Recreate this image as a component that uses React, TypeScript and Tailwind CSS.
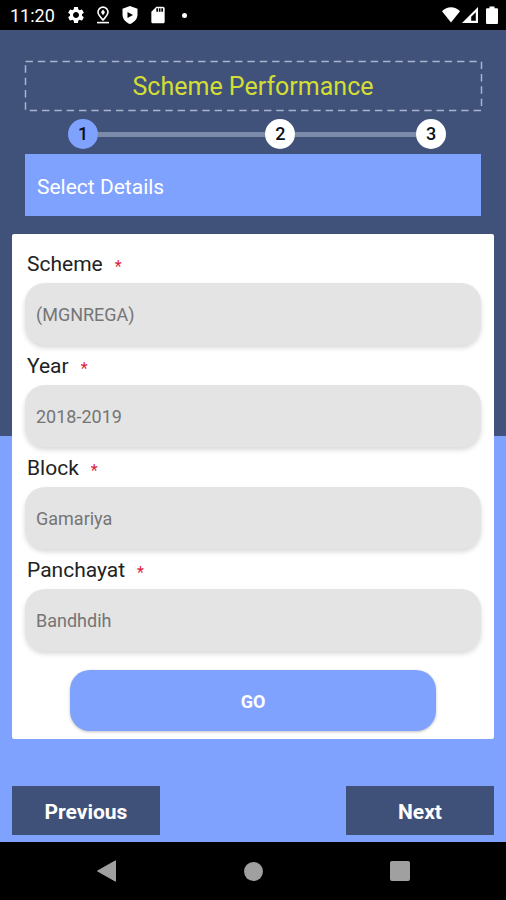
import React from "react";
import { MdSettings, MdSdCard } from "react-icons/md";

const STEPS = ["1", "2", "3"];

const FIELDS = [
  { id: "scheme", label: "Scheme", value: "(MGNREGA)" },
  { id: "year", label: "Year", value: "2018-2019" },
  { id: "block", label: "Block", value: "Gamariya" },
  { id: "panchayat", label: "Panchayat", value: "Bandhdih" },
];

const StatusBar: React.FC = () => (
  <div className="flex h-[30px] shrink-0 items-center justify-between bg-black pl-2.5 pr-2 text-white">
    <div className="flex items-center">
      <span className="w-14 pt-0.5 text-lg">11:20</span>
      <MdSettings className="mr-2.5 h-5 w-5" />
      <svg viewBox="0 0 14 18" className="mr-3 h-[18px] w-3.5" fill="none" stroke="currentColor" strokeWidth="1.6">
        <path d="M7 14C4.200 11 2 9 2 6.100a5 5 0 0 1 10 0C12 9 9.800 11 7 14z" />
        <path d="M7 3.600l2 2.600-2 3-2-3z" fill="currentColor" stroke="none" />
        <path d="M1 16.600h12" />
      </svg>
      <svg viewBox="0 0 16 18" className="mr-3 h-[18px] w-4" fill="currentColor" fillRule="evenodd">
        <path d="M8 0l7.500 2.700v6c0 4.200-3.500 7.800-7.500 9.300-4-1.500-7.500-5.100-7.500-9.300v-6zM5.500 6v6L11 9z" />
      </svg>
      <MdSdCard className="-mx-0.5 h-5 w-5" />
      <span className="ml-4 h-[5px] w-[5px] rounded-full bg-white" />
    </div>
    <div className="flex items-center">
      <svg viewBox="0 0 18 16" className="h-4 w-[18px]" fill="currentColor">
        <path d="M0 4.200C5-1 13-1 18 4.200L9 15.500z" />
      </svg>
      <svg viewBox="0 0 16 16" className="ml-0.5 h-4 w-4" fill="currentColor" fillRule="evenodd">
        <path d="M16 0v16H0zM13.800 5.200L9.200 9.800v4h4.600z" />
      </svg>
      <svg viewBox="0 0 12 18" className="ml-2 h-[18px] w-3" fill="currentColor">
        <path d="M3.500 0.500h5v1.700H11a1 1 0 0 1 1 1V17a1 1 0 0 1-1 1H1a1 1 0 0 1-1-1V3.200a1 1 0 0 1 1-1h2.500z" />
      </svg>
    </div>
  </div>
);

const Stepper: React.FC = () => (
  <ol className="mt-2 flex items-center pl-[43px] pr-[35px]">
    {STEPS.map((step, index) => (
      <React.Fragment key={step}>
        {index > 0 && (
          <li
            aria-hidden="true"
            className={`h-[5px] bg-[#7d8baa] ${index === 1 ? "grow-[168]" : "grow-[121]"}`}
          />
        )}
        <li
          className={`flex h-[30px] w-[30px] items-center justify-center rounded-full text-lg font-medium text-[#0b1020] ${
            index === 0 ? "bg-[#80a2ff]" : "bg-white"
          }`}
        >
          {step}
        </li>
      </React.Fragment>
    ))}
  </ol>
);

const Field: React.FC<{ id: string; label: string; value: string }> = ({ id, label, value }) => (
  <div>
    <label htmlFor={id} className="flex h-10 items-center gap-3 pl-0.5 pt-1 text-[21px] text-[#222]">
      {label}
      <span className="pt-1 text-base text-[#e0203c]">*</span>
    </label>
    <select
      id={id}
      defaultValue={value}
      className="block h-[62px] w-full appearance-none rounded-[20px] bg-[#e4e4e4] px-[11px] pt-0.5 text-lg text-[#757575] shadow-[0_3px_5px_rgba(0,0,0,0.15)]"
    >
      <option>{value}</option>
    </select>
  </div>
);

const NavBar: React.FC = () => (
  <nav className="flex h-[58px] shrink-0 items-center justify-around bg-black px-[33px] text-[#a0a0a0]">
    <button aria-label="Back">
      <svg viewBox="0 0 20 22" className="h-[22px] w-5" fill="currentColor">
        <path d="M18.500 0.800v20.400L0.500 11z" stroke="currentColor" strokeLinejoin="round" />
      </svg>
    </button>
    <button aria-label="Home" className="h-[19px] w-[19px] rounded-full bg-[#a0a0a0]" />
    <button aria-label="Recent apps" className="h-5 w-5 rounded-[2px] bg-[#a0a0a0]" />
  </nav>
);

export default function App() {
  return (
    <div className="flex min-h-screen flex-col font-[Roboto,sans-serif]">
      <StatusBar />
      <main className="flex grow flex-col bg-[linear-gradient(#40527a_50%,#80a2ff_50%)] px-3 pb-[7px] pt-[31px]">
        <header className="px-[13px]">
          <div className="relative flex h-[50px] items-center justify-center">
            <svg className="absolute inset-0 h-full w-full overflow-visible" fill="none" aria-hidden="true">
              <rect x="0.500" y="0.500" width="100%" height="49" stroke="#a9b5cf" strokeWidth="1.500" strokeDasharray="7.400 4.930" />
            </svg>
            <h1 className="pt-0.5 text-[25px] text-[#d3de35]">Scheme Performance</h1>
          </div>
          <Stepper />
          <h2 className="mt-[5px] flex h-[62px] items-center bg-[#80a2ff] px-3 pt-1.5 text-[21px] text-white">
            Select Details
          </h2>
        </header>

        <form className="mt-[18px] rounded-[2px] bg-white px-[13px] pb-2 pt-[9px]">
          {FIELDS.map((field) => (
            <Field key={field.id} {...field} />
          ))}
          <div className="mt-[19px] px-[45px]">
            <button
              type="button"
              className="h-[61px] w-full rounded-[20px] bg-[#80a2ff] pt-0.5 text-lg font-bold text-white shadow-[0_1px_3px_rgba(0,0,0,0.25)]"
            >
              GO
            </button>
          </div>
        </form>

        <div className="mt-auto flex justify-between text-[21px] font-bold text-white">
          <button className="h-[49px] w-[148px] bg-[#3f5178] pt-1">Previous</button>
          <button className="h-[49px] w-[148px] bg-[#3f5178] pt-1">Next</button>
        </div>
      </main>
      <NavBar />
    </div>
  );
}
